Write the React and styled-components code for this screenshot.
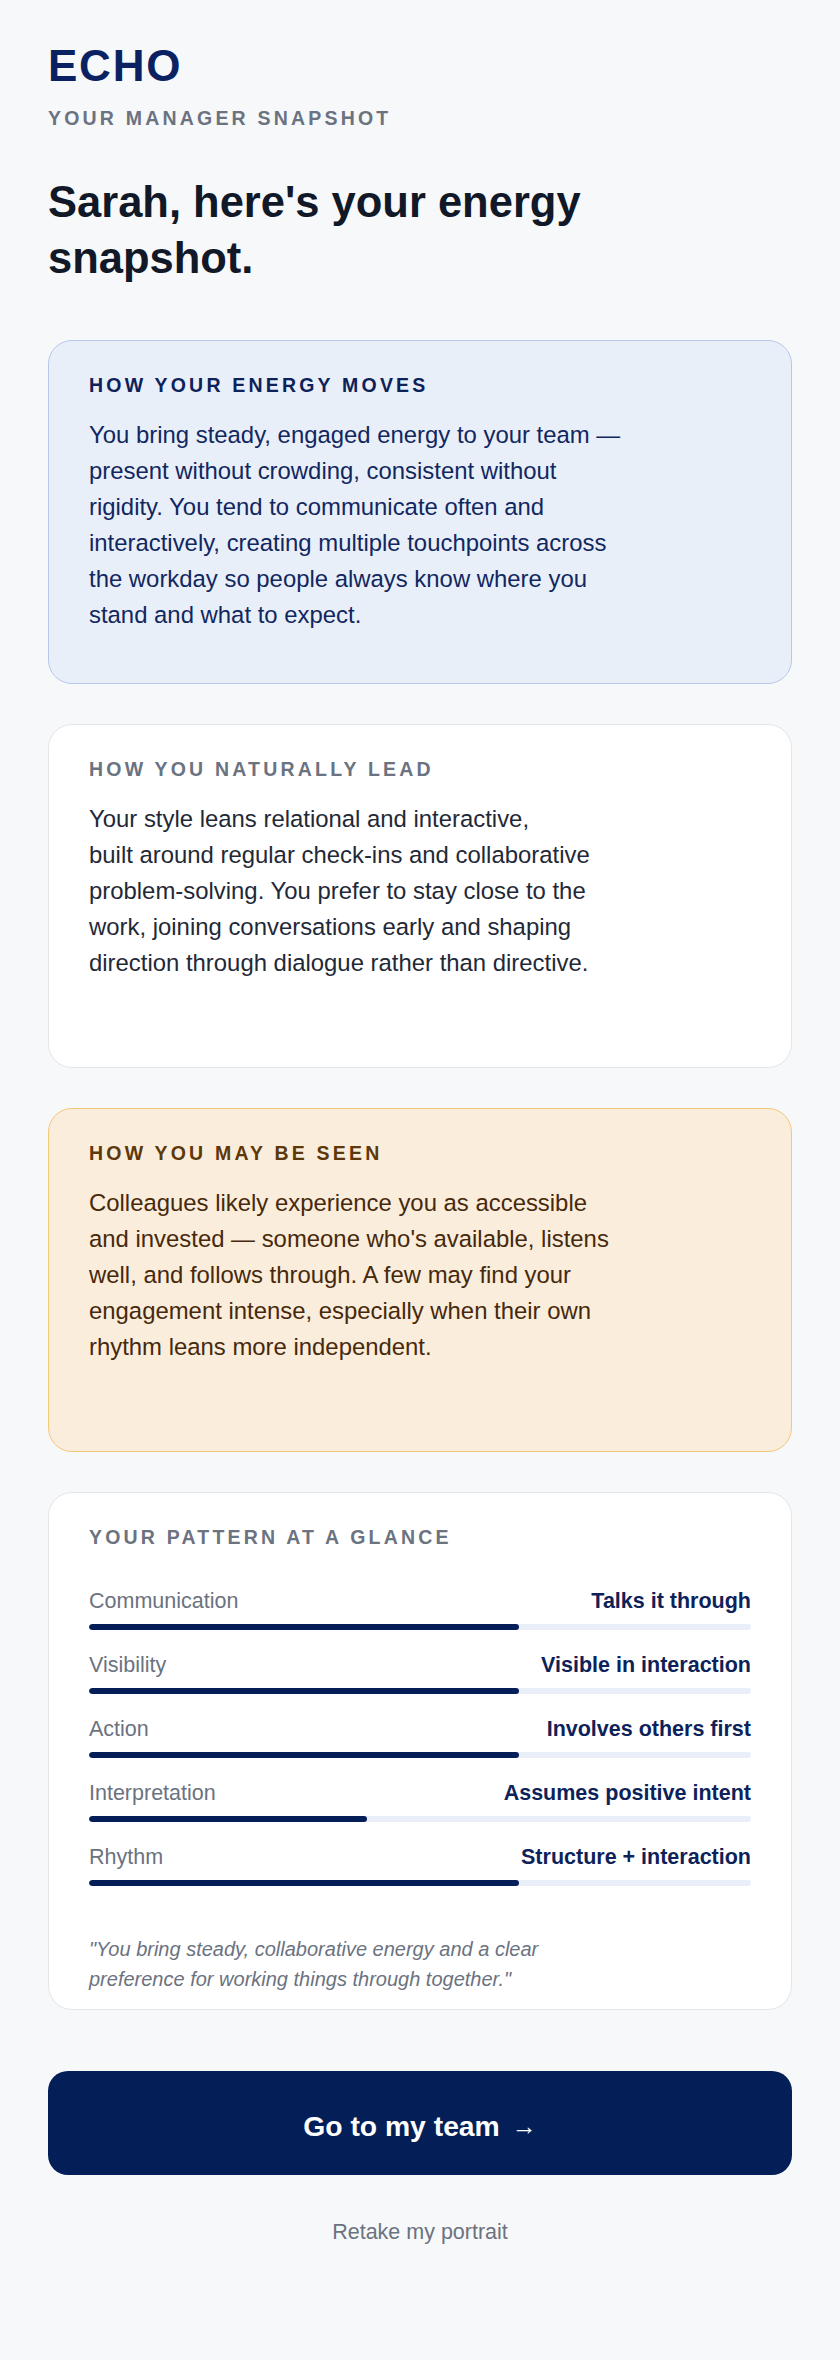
import React from "react";
import styled, { createGlobalStyle, css } from "styled-components";

const GlobalStyle = createGlobalStyle`
  *, *::before, *::after { box-sizing: border-box; }
  html, body {
    margin: 0;
    padding: 0;
    background: #f7f8fa;
  }
  body {
    font-family: "Liberation Sans", Arial, Helvetica, sans-serif;
    -webkit-font-smoothing: antialiased;
  }
`;

const tones = {
  energy: {
    bg: "#e9eff9",
    border: "#b5c7eb",
    label: "#0d2259",
    text: "#112760",
  },
  lead: {
    bg: "#ffffff",
    border: "#e3e5ea",
    label: "#6b7280",
    text: "#1f2937",
  },
  seen: {
    bg: "#fbeddb",
    border: "#f5c779",
    label: "#5c380a",
    text: "#46290c",
  },
};

const Page = styled.main`
  padding: 40px 48px 110px;
  display: flex;
  flex-direction: column;
`;

const Brand = styled.div`
  font-size: 44px;
  line-height: 52px;
  font-weight: 700;
  letter-spacing: 0.04em;
  color: #0a2262;
`;

const Eyebrow = styled.div`
  margin-top: 13.5px;
  font-size: 19.5px;
  line-height: 24px;
  font-weight: 700;
  letter-spacing: 3.2px;
  color: #6b7280;
`;

const Headline = styled.h1`
  margin: 44px 0 0;
  max-width: 600px;
  font-size: 43.5px;
  line-height: 56px;
  font-weight: 700;
  color: #111827;
`;

const Stack = styled.div`
  margin-top: 54.5px;
  display: flex;
  flex-direction: column;
  gap: 40px;
`;

const cardShell = css`
  border-radius: 24px;
  border: 1.5px solid;
  padding: 32px 40px;
`;

const InsightCard = styled.section`
  ${cardShell};
  min-height: 344px;
  background: ${(p) => tones[p.$tone].bg};
  border-color: ${(p) => tones[p.$tone].border};
`;

const CardLabel = styled.h2`
  margin: 0;
  font-size: 19.5px;
  line-height: 24px;
  font-weight: 700;
  letter-spacing: 3.2px;
  color: ${(p) => tones[p.$tone].label};
`;

const CardBody = styled.p`
  margin: 20px 0 0;
  font-size: 23.9px;
  line-height: 36px;
  color: ${(p) => tones[p.$tone].text};
`;

const PatternCard = styled.section`
  ${cardShell};
  padding-bottom: 15px;
  background: #ffffff;
  border-color: #e3e5ea;
`;

const TraitList = styled.ul`
  list-style: none;
  margin: 37.5px 0 0;
  padding: 0;
  display: flex;
  flex-direction: column;
  gap: 21px;
`;

const Trait = styled.li`
  display: flex;
  flex-direction: column;
  gap: 8px;
`;

const TraitHead = styled.div`
  display: flex;
  justify-content: space-between;
  align-items: baseline;
  font-size: 21.5px;
  line-height: 29px;
`;

const TraitName = styled.span`
  color: #6b7280;
`;

const TraitValue = styled.span`
  font-weight: 700;
  color: #0d2259;
`;

const Track = styled.div`
  height: 6px;
  border-radius: 3px;
  background: #e9eef8;
  overflow: hidden;
`;

const Fill = styled.div`
  height: 100%;
  border-radius: 3px;
  background: #061e57;
`;

const Quote = styled.p`
  margin: 48px 0 0;
  font-size: 20px;
  line-height: 30px;
  font-style: italic;
  color: #6b7280;
`;

const PrimaryButton = styled.button`
  margin-top: 61px;
  width: 100%;
  height: 104px;
  padding: 8px 0 0;
  border: none;
  border-radius: 20px;
  background: #041f57;
  color: #ffffff;
  font-family: inherit;
  font-size: 28.3px;
  font-weight: 700;
  display: flex;
  align-items: center;
  justify-content: center;
  cursor: pointer;
`;

const Arrow = styled.span`
  margin-left: 12px;
  font-size: 25px;
  font-weight: 400;
`;

const TextLink = styled.button`
  margin-top: 42px;
  align-self: center;
  padding: 0;
  border: none;
  background: none;
  font-family: inherit;
  font-size: 21.5px;
  line-height: 30px;
  color: #6b7280;
  cursor: pointer;
`;

const sections = [
  {
    tone: "energy",
    label: "HOW YOUR ENERGY MOVES",
    lines: [
      "You bring steady, engaged energy to your team —",
      "present without crowding, consistent without",
      "rigidity. You tend to communicate often and",
      "interactively, creating multiple touchpoints across",
      "the workday so people always know where you",
      "stand and what to expect.",
    ],
  },
  {
    tone: "lead",
    label: "HOW YOU NATURALLY LEAD",
    lines: [
      "Your style leans relational and interactive,",
      "built around regular check-ins and collaborative",
      "problem-solving. You prefer to stay close to the",
      "work, joining conversations early and shaping",
      "direction through dialogue rather than directive.",
    ],
  },
  {
    tone: "seen",
    label: "HOW YOU MAY BE SEEN",
    lines: [
      "Colleagues likely experience you as accessible",
      "and invested — someone who's available, listens",
      "well, and follows through. A few may find your",
      "engagement intense, especially when their own",
      "rhythm leans more independent.",
    ],
  },
];

const traits = [
  { name: "Communication", value: "Talks it through", level: 65 },
  { name: "Visibility", value: "Visible in interaction", level: 65 },
  { name: "Action", value: "Involves others first", level: 65 },
  { name: "Interpretation", value: "Assumes positive intent", level: 42 },
  { name: "Rhythm", value: "Structure + interaction", level: 65 },
];

function Lines({ lines }) {
  return lines.map((line, i) => (
    <React.Fragment key={i}>
      {i > 0 && <br />}
      {line}
    </React.Fragment>
  ));
}

export default function App() {
  return (
    <>
      <GlobalStyle />
      <Page>
        <Brand>ECHO</Brand>
        <Eyebrow>YOUR MANAGER SNAPSHOT</Eyebrow>
        <Headline>Sarah, here's your energy snapshot.</Headline>

        <Stack>
          {sections.map((s) => (
            <InsightCard key={s.tone} $tone={s.tone}>
              <CardLabel $tone={s.tone}>{s.label}</CardLabel>
              <CardBody $tone={s.tone}>
                <Lines lines={s.lines} />
              </CardBody>
            </InsightCard>
          ))}

          <PatternCard>
            <CardLabel $tone="lead">YOUR PATTERN AT A GLANCE</CardLabel>
            <TraitList>
              {traits.map((t) => (
                <Trait key={t.name}>
                  <TraitHead>
                    <TraitName>{t.name}</TraitName>
                    <TraitValue>{t.value}</TraitValue>
                  </TraitHead>
                  <Track>
                    <Fill style={{ width: `${t.level}%` }} />
                  </Track>
                </Trait>
              ))}
            </TraitList>
            <Quote>
              <Lines
                lines={[
                  '"You bring steady, collaborative energy and a clear',
                  'preference for working things through together."',
                ]}
              />
            </Quote>
          </PatternCard>
        </Stack>

        <PrimaryButton>
          Go to my team<Arrow>→</Arrow>
        </PrimaryButton>
        <TextLink>Retake my portrait</TextLink>
      </Page>
    </>
  );
}
